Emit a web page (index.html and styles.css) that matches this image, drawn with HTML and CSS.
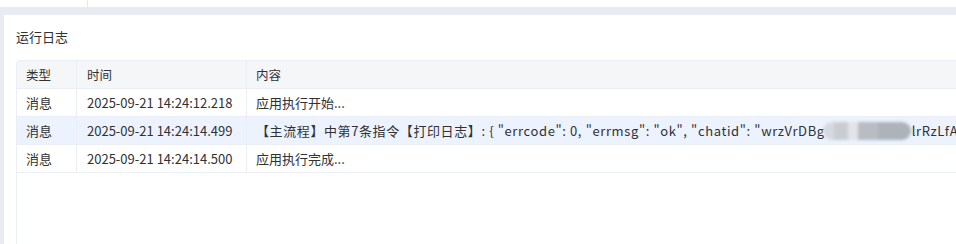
FILE: index.html
```html
<!DOCTYPE html>
<html lang="zh-CN">
<head>
<meta charset="utf-8">
<link rel="stylesheet" href="styles.css">
</head>
<body>
<div class="topbar"><div class="topbar-side"></div><div class="topbar-main"></div></div>
<div class="panel">
  <div class="title">运行日志</div>
  <div class="table">
    <div class="row head">
      <div class="cell c1">类型</div>
      <div class="cell c2">时间</div>
      <div class="cell c3">内容</div>
    </div>
    <div class="row">
      <div class="cell c1">消息</div>
      <div class="cell c2">2025-09-21 14:24:12.218</div>
      <div class="cell c3">应用执行开始...</div>
    </div>
    <div class="row active">
      <div class="cell c1">消息</div>
      <div class="cell c2">2025-09-21 14:24:14.499</div>
      <div class="cell c3"><span class="cjk">【主流程】中第7条指令【打印日志】</span><span class="latin">: { "errcode": 0, "errmsg": "ok", "chatid": "wrzVrDBg</span><span class="blur"></span><span class="latin">lrRzLfA</span></div>
    </div>
    <div class="row">
      <div class="cell c1">消息</div>
      <div class="cell c2">2025-09-21 14:24:14.500</div>
      <div class="cell c3">应用执行完成...</div>
    </div>
    <div class="empty"></div>
  </div>
</div>
</body>
</html>
```
FILE: styles.css
```css
html, body {
  margin: 0;
  padding: 0;
  width: 956px;
  height: 244px;
  overflow: hidden;
  background: #e8ebef;
  font-family: "Noto Sans CJK SC", "Noto Sans", sans-serif;
  color: #303133;
}
.topbar {
  display: flex;
  height: 7px;
  background: #fff;
}
.topbar-side {
  width: 87px;
  border-right: 1px solid #e4e7ed;
}
.topbar-main { flex: 1; }
.panel {
  margin: 8px 0 0 4px;
  background: #fff;
  padding: 0 0 0 12px;
  height: 229px;
  overflow: hidden;
}
.title {
  font-size: 13px;
  line-height: 20px;
  padding-top: 12px;
  padding-bottom: 13px;
  color: #303133;
}
.table {
  width: 940px;
  border-left: 1px solid #ebeef5;
  border-top: 1px solid #ebeef5;
  border-top-left-radius: 4px;
  font-size: 13px;
  overflow: hidden;
}
.row {
  display: flex;
  height: 28px;
  border-bottom: 1px solid #ebeef5;
  box-sizing: border-box;
}
.row.head {
  background: #f5f6f8;
  font-size: 12.5px;
}
.row.active { background: #ecf3fe; }
.cell {
  display: flex;
  align-items: center;
  padding-left: 9px;
  box-sizing: border-box;
  border-right: 1px solid #ebeef5;
  white-space: nowrap;
  overflow: hidden;
}
.c1 { width: 60px; flex: none; }
.c2 { width: 170px; flex: none; padding-left: 10px; }
.c3 { flex: 1; border-right: none; padding-left: 9px; }
.cjk { letter-spacing: 0.6px; }
.latin { letter-spacing: 0.62px; white-space: pre; }
.blur {
  display: inline-block;
  flex: none;
  width: 88px;
  height: 18px;
  margin: 0 1px 0 -2px;
  border-radius: 9px;
  background: linear-gradient(90deg, #d6d9de 0 12%, #c9ccd2 12% 28%, #e2e4e8 28% 40%, #b8bcc3 40% 62%, #aeb2b9 62% 100%);
  filter: blur(1.5px);
}
.empty { height: 120px; }
```
